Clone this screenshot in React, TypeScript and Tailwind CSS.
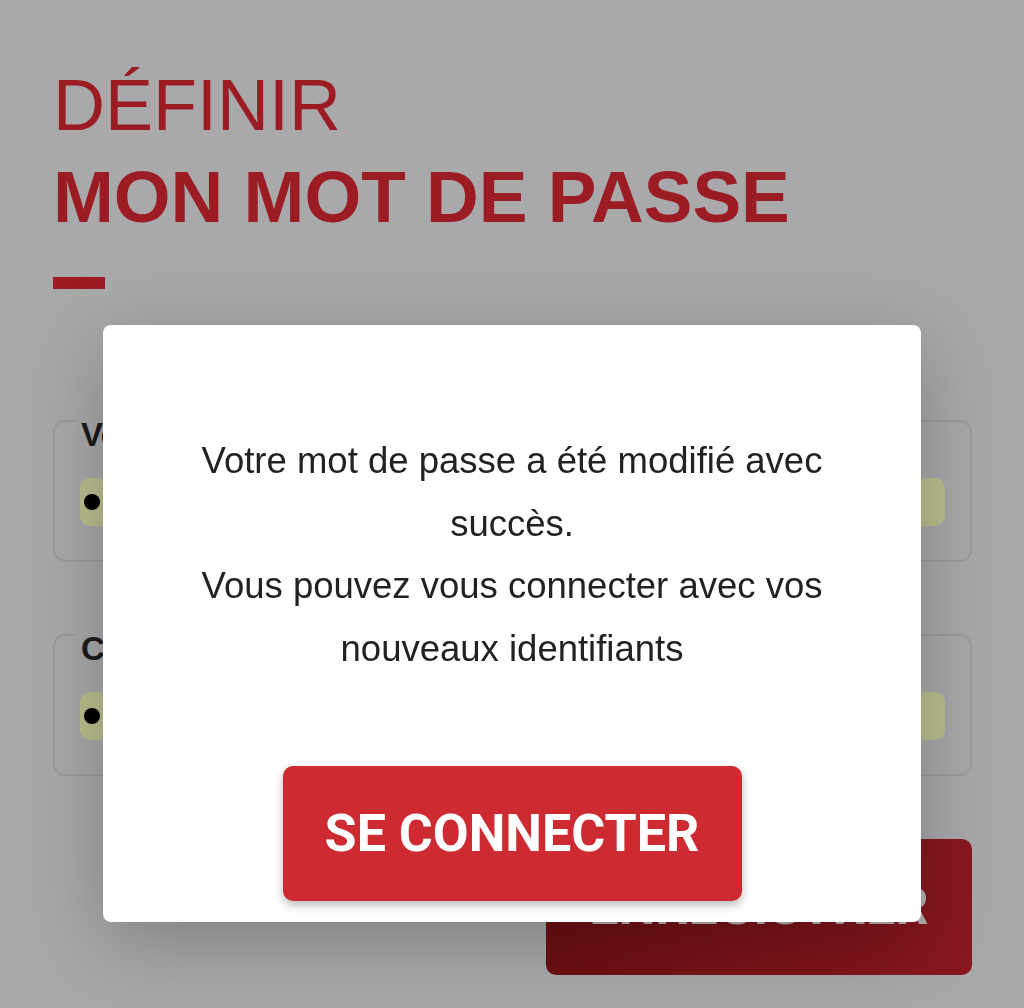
import React from 'react';

interface FieldProps {
  label: string;
}

function PasswordField({ label }: FieldProps) {
  return (
    <div className="relative h-[142px] rounded-[12px] border-2 border-[#9d9c9e] px-[25px] pt-[56px]">
      {/* Label sitting on the border */}
      <span className="absolute left-[20px] top-[-6px] bg-[#a9a8aa] px-[6px] text-[33px] font-bold leading-[38px] text-[#1c1c1c]">
        {label}
      </span>
      {/* Autofilled input */}
      <div className="flex h-[48px] items-center rounded-[10px] bg-[#bcbf8e] pl-[4px]">
        <span className="block h-[16px] w-[16px] rounded-full bg-black" />
      </div>
    </div>
  );
}

export default function App() {
  return (
    <div
      className="relative min-h-[1008px] w-full overflow-hidden bg-[#a9a8aa] pl-[53px] pr-[52px] pt-[59px]"
      style={{ fontFamily: '"Liberation Sans", Arial, sans-serif' }}
    >
      {/* Page title */}
      <h1 className="leading-[92px] text-[#9c1c24]">
        <span className="block text-[72px] font-normal">DÉFINIR</span>
        <span className="block text-[73px] font-bold">MON MOT DE PASSE</span>
      </h1>
      <div className="mt-[34px] h-[12px] w-[52px] bg-[#9c1c24]" />

      {/* Form under the dialog */}
      <div className="mt-[131px] flex flex-col gap-[72px]">
        <PasswordField label="Votre nouveau mot de passe" />
        <PasswordField label="Confirmer le mot de passe" />
      </div>
      <div className="mt-[63px] flex justify-end">
        <div
          className="flex h-[136px] w-[426px] items-center justify-center rounded-[10px] bg-gradient-to-r from-[#6c0f14] to-[#8a1820] text-[52px] font-bold text-[#b9b1b2]"
          style={{ fontFamily: 'Roboto, "Liberation Sans", sans-serif' }}
        >
          ENREGISTRER
        </div>
      </div>

      {/* Dialog */}
      <div className="fixed inset-0 z-10 flex items-start justify-center pt-[325px]">
        <div className="flex w-[818px] flex-col items-center rounded-[8px] bg-white px-[60px] pb-[21px] pt-[105px] shadow-[0_20px_80px_rgba(0,0,0,0.25)]">
          <p className="text-center text-[36.5px] leading-[62.5px] text-[#222222]">
            Votre mot de passe a été modifié avec succès.
            <br />
            Vous pouvez vous connecter avec vos nouveaux identifiants
          </p>
          <button
            type="button"
            className="mt-[86px] h-[135px] w-[459px] rounded-[10px] bg-[#ce2a31] text-[52px] font-bold text-white shadow-[0_4px_10px_rgba(0,0,0,0.28)]"
            style={{ fontFamily: 'Roboto, "Liberation Sans", sans-serif' }}
          >
            SE CONNECTER
          </button>
        </div>
      </div>
    </div>
  );
}
